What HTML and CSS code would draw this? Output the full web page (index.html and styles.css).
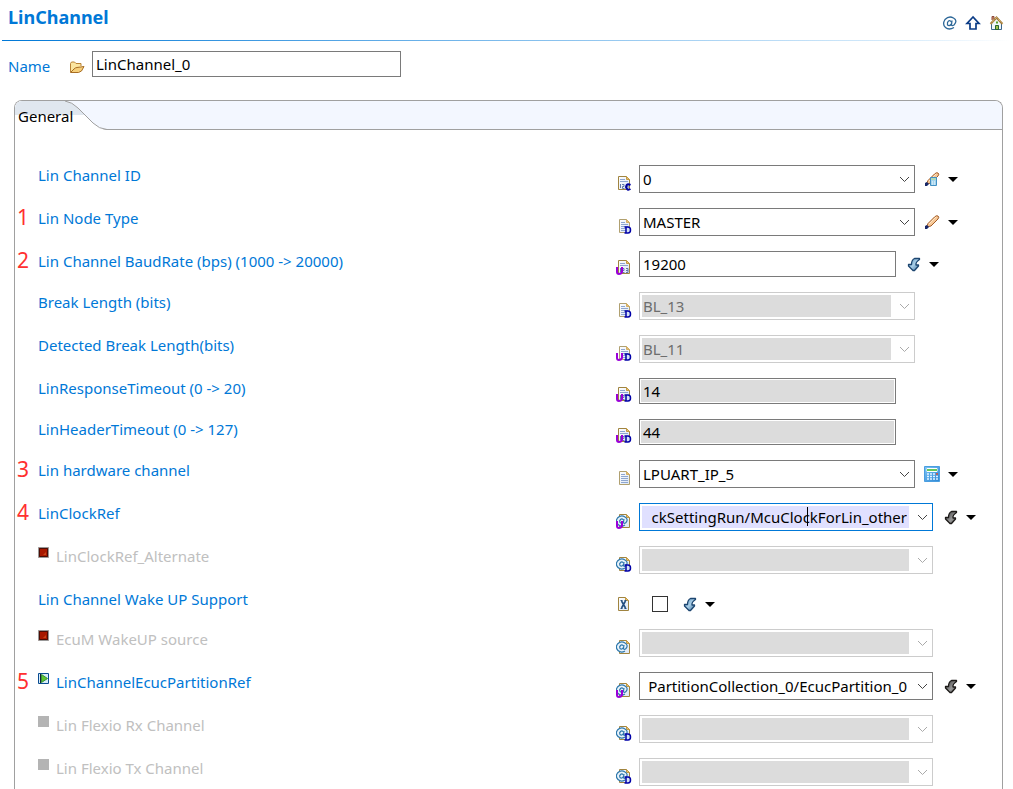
FILE: index.html
```html
<!DOCTYPE html>
<html lang="en">
<head>
  <meta charset="UTF-8" />
  <meta name="viewport" content="width=device-width, initial-scale=1.0"/>
  <title>LinChannel</title>
  <link rel="stylesheet" href="styles.css">
</head>
<body>
  <!-- Icon shapes used by the rows below -->
  <svg class="sprite" aria-hidden="true">
    <defs>
      <linearGradient id="blue" x1="0" y1="0" x2="1" y2="1"><stop offset="0" stop-color="#5f93bd"/><stop offset="0.5" stop-color="#a9cfe8"/><stop offset="1" stop-color="#3a6c9c"/></linearGradient>
      <linearGradient id="dark" x1="0" y1="0" x2="1" y2="1"><stop offset="0" stop-color="#333"/><stop offset="0.6" stop-color="#999"/><stop offset="1" stop-color="#444"/></linearGradient>
      <linearGradient id="calc" x1="0" y1="0" x2="1" y2="1"><stop offset="0" stop-color="#7cc4f6"/><stop offset="1" stop-color="#2b86d3"/></linearGradient>
      <linearGradient id="paper" x1="0" y1="0" x2="1" y2="1"><stop offset="0" stop-color="#fff"/><stop offset="1" stop-color="#dbe6f5"/></linearGradient>
    </defs>
    <symbol id="doc" viewBox="0 0 16 16">
      <path d="M3.500 1.500h7l3 3v10h-10z" fill="url(#paper)" stroke="#b0a070"/>
      <path d="M10.500 1.500v3h3z" fill="#e8c070" stroke="#d2ae66"/>
      <path d="M5 4.500h4M5 6.500h7M5 8.500h7M5 10.500h7M5 12.500h7" stroke="#8ea6d0"/>
    </symbol>
    <symbol id="doc-num" viewBox="0 0 16 16">
      <path d="M2.500 1.500h8l3 3v10h-11z" fill="url(#paper)" stroke="#a08440"/>
      <path d="M10.500 1.500v3h3z" fill="#e8c070" stroke="#c39a45"/>
      <path d="M4 4.500h5M4 6.500h8" stroke="#8ea6d0"/>
      <path d="M4.500 9v4M6 9.500h2v2h-1.500v2h2M10 9.500h2v4h-2M10 11.500h2" fill="none" stroke="#6078a8"/>
    </symbol>
    <symbol id="doc-ref" viewBox="0 0 16 16">
      <path d="M3.500 1.500h7l3 3v10h-10z" fill="url(#paper)" stroke="#a08440"/>
      <path d="M10.500 1.500v3h3z" fill="#e8c070" stroke="#c39a45"/>
      <circle cx="5.500" cy="8" r="5" fill="#e8f3fb"/>
      <path d="M9 12Q5 14.500 2 11.500T1.500 5Q5 1.500 9 4T9.500 10Q7.500 11 7.500 9L8 6" fill="none" stroke="#2e78ac" stroke-width="1.200"/>
      <path d="M7.500 7Q6 5 4.500 6.500T4 9.500Q6 11 7.500 8.500" fill="none" stroke="#2e78ac" stroke-width="1.200"/>
    </symbol>
    <symbol id="doc-x" viewBox="0 0 16 16">
      <path d="M2.500 1.500h7l3 3v10h-10z" fill="url(#paper)" stroke="#a08440"/>
      <path d="M9.500 1.500v3h3z" fill="#e8c070" stroke="#c39a45"/>
      <path d="M5.500 5l4 7M9.500 5l-4 7" stroke="#234f80" stroke-width="1.600"/>
      <path d="M4.500 4.500h2M8.500 4.500h2M4.500 12.500h2M8.500 12.500h2" stroke="#234f80"/>
    </symbol>
    <symbol id="mark-u" viewBox="0 0 16 16"><path d="M1 8v5q0 2 2 2t3-2v-5" fill="none" stroke="#9a00d8" stroke-width="2"/></symbol>
    <symbol id="mark-d" viewBox="0 0 16 16"><path d="M10 9h2q2.500 0 2.500 3t-2.500 3h-2zM8.500 9h2M8.500 15h2" fill="#d5e2f6" stroke="#0000a8" stroke-width="1.500"/></symbol>
    <symbol id="mark-c" viewBox="0 0 16 16"><path d="M14.500 10q-4-2-4.500 2q1 4 4.500 2" fill="none" stroke="#0000a0" stroke-width="2"/></symbol>
    <symbol id="pencil" viewBox="0 0 16 16">
      <path d="M2.500 13L4 9.500 10.500 3q2-2 3.500-1t0 3L7 12z" fill="#f7c896" stroke="#a25c28"/>
      <path d="M5 10l7-7" stroke="#ffe6c6"/>
      <path d="M1 15v-3l2-1 2 2-2 2z" fill="#182868"/>
    </symbol>
    <symbol id="pencil-calc" viewBox="0 0 16 16">
      <use href="#pencil"/>
      <path d="M6.500 6.500h6v8h-6z" fill="#a7d5ee" stroke="#4290c4"/>
      <path d="M7 8h5" stroke="#b8dd82"/>
      <path d="M8 11h1M10 11h1M8 13h1M10 13h1" stroke="#f2fbff"/>
    </symbol>
    <symbol id="calculator" viewBox="0 0 16 16">
      <path d="M0.500 0.500h15v15h-15z" fill="url(#calc)" stroke="#4b9ee0"/>
      <path d="M3 2.500h10v3H3z" fill="#e0f3c8" stroke="#fff"/>
      <path d="M3 4h10" stroke="#65c65b" stroke-width="2"/>
      <path d="M3 8h2M6 8h2M9 8h2M3 10.500h2M6 10.500h2M9 10.500h2M3 13h2M6 13h2M9 13h2" stroke="#e4f4ff" stroke-width="1.500"/>
      <path d="M12 8h2" stroke="#e04c30" stroke-width="1.500"/><path d="M12 10.500h2M12 13h2" stroke="#d8eeff" stroke-width="1.500"/>
    </symbol>
    <symbol id="goto" viewBox="0 0 16 16">
      <path d="M14.500 2.500H9.500Q6.500 4 6.500 8.500H3.500V10L8 14.500h1.500l4-4.500V9H11Q10.500 6 14.500 3.500z" stroke-width="1.300" stroke-linejoin="round"/>
    </symbol>
    <symbol id="caret" viewBox="0 0 10 5"><path d="M0 0h10L5 5z" fill="#000"/></symbol>
    <symbol id="chevron" viewBox="0 0 11 7"><path d="M1 1l4.500 4.500L10 1" fill="none" stroke="currentColor"/></symbol>
    <symbol id="stop" viewBox="0 0 11 11"><path d="M0.500 0.500h10v10h-10z" fill="#a81800" stroke="#999"/><path d="M1.500 1.500h8v8h-8z" fill="none" stroke="#4c0e06"/><path d="M5 8l3-3v3z" fill="#c84418"/></symbol>
    <symbol id="play" viewBox="0 0 11 11"><path d="M0.500 0.500h10v10h-10z" fill="#d8ecfa" stroke="#0a4c91"/><path d="M2.500 1v9" stroke="#123"/><path d="M3.500 1.500L9.500 5.500l-6 4z" fill="#5fc52f" stroke="#37913a"/></symbol>
    <symbol id="off" viewBox="0 0 11 11"><path d="M0 0h11v11H0z" fill="#b4b4b4"/></symbol>
  </svg>

  <header class="page-header">
    <h1>LinChannel</h1>
    <nav class="links">
      <a href="#reference" aria-label="Reference">
        <svg viewBox="0 0 16 16"><path d="M13 12.500Q8 15.500 4.500 12.500T4 4.500Q8 0.500 12.500 3T13 10Q10.500 11.500 10.500 9.500L11 5.500" fill="none" stroke="#2c6798" stroke-width="1.300"/><path d="M10.500 7Q9 5 7.500 6T6.500 10Q8.500 11.500 10.500 9" fill="none" stroke="#2c6798" stroke-width="1.300"/></svg>
      </a>
      <a href="#up" aria-label="Up">
        <svg viewBox="0 0 16 16"><path d="M8 2L2 8.500h3V14h6V8.500h3z" fill="#fff" stroke="#0b3c86" stroke-width="1.700"/></svg>
      </a>
      <a href="#home" aria-label="Home">
        <svg viewBox="0 0 16 16"><path d="M2.500 8v6.500h10V8L7.500 3z" fill="#eef6fb" stroke="#3b658c"/><path d="M3 5V1.500h2V4" fill="#d58c6a" stroke="#8a4b3c"/><path d="M1.500 9L7.500 2.500l6 6.500" fill="none" stroke="#a07838" stroke-width="2"/><path d="M2 8.500L7.500 2.500l6 6" fill="none" stroke="#f1d38c" stroke-dasharray="1 1"/><path d="M6.500 10.500h3v4h-3z" fill="#3f9f50" stroke="#27652e"/><path d="M7 7.500h2" stroke="#55a02c" stroke-width="2"/><path d="M8 11v3" stroke="#ffe04a"/></svg>
      </a>
    </nav>
  </header>

  <div class="name-row">
    <label for="name">Name</label>
    <svg class="icon" viewBox="0 0 16 16"><path d="M1.500 13V4.500l1-1.500h3l1.500 1.500h5V7" fill="#fbe5a0" stroke="#b98235"/><path d="M1.500 13.500L5 10q1.500-1.500 3-1.500l7-1L12.500 12l-3 1.500z" fill="#f6cf7a" stroke="#a86d22"/></svg>
    <input type="text" id="name" class="text" value="LinChannel_0">
  </div>

  <main class="panel">
    <div class="tabs" role="tablist">
      <button type="button" class="tab" role="tab" aria-selected="true">
        <svg viewBox="0 0 92 30"><path d="M0 30V0h50q7 1 13 7l15 15q6 6 14 7v1z" fill="#fff"/><path d="M0 14V0h50q7 1 13 7l7 7z" fill="#e0e7ef"/><path d="M50 0q7 1 13 7l15 15q6 6 14 6.500" fill="none" stroke="#a0a0a0"/></svg>
        <span>General</span>
      </button>
    </div>

    <form class="rows">
      <div class="row">
        <span class="number"></span>
        <div class="caption"><label for="channelId">Lin Channel ID</label></div>
        <svg class="icon status"><use href="#doc-num"/><use href="#mark-c"/></svg>
        <div class="field">
          <span class="combo"><select id="channelId"><option>0</option></select><svg class="chevron"><use href="#chevron"/></svg></span>
          <button type="button" class="tool" aria-label="Edit calculated value"><svg class="icon"><use href="#pencil-calc"/></svg><svg class="caret"><use href="#caret"/></svg></button>
        </div>
      </div>

      <div class="row">
        <span class="number">1</span>
        <div class="caption"><label for="nodeType">Lin Node Type</label></div>
        <svg class="icon status"><use href="#doc"/><use href="#mark-d"/></svg>
        <div class="field">
          <span class="combo"><select id="nodeType"><option>MASTER</option></select><svg class="chevron"><use href="#chevron"/></svg></span>
          <button type="button" class="tool" aria-label="Edit value"><svg class="icon"><use href="#pencil"/></svg><svg class="caret"><use href="#caret"/></svg></button>
        </div>
      </div>

      <div class="row">
        <span class="number">2</span>
        <div class="caption"><label for="baudRate">Lin Channel BaudRate (bps) (1000 -&gt; 20000)</label></div>
        <svg class="icon status"><use href="#doc-num"/><use href="#mark-u"/></svg>
        <div class="field">
          <input type="text" id="baudRate" class="text" value="19200">
          <button type="button" class="tool" aria-label="Set default"><svg class="icon goto-blue"><use href="#goto"/></svg><svg class="caret"><use href="#caret"/></svg></button>
        </div>
      </div>

      <div class="row">
        <span class="number"></span>
        <div class="caption"><label for="breakLength">Break Length (bits)</label></div>
        <svg class="icon status"><use href="#doc"/><use href="#mark-d"/></svg>
        <div class="field">
          <span class="combo"><select id="breakLength" disabled><option>BL_13</option></select><svg class="chevron"><use href="#chevron"/></svg></span>
        </div>
      </div>

      <div class="row">
        <span class="number"></span>
        <div class="caption"><label for="detectedBreak">Detected Break Length(bits)</label></div>
        <svg class="icon status"><use href="#doc"/><use href="#mark-u"/><use href="#mark-d"/></svg>
        <div class="field">
          <span class="combo"><select id="detectedBreak" disabled><option>BL_11</option></select><svg class="chevron"><use href="#chevron"/></svg></span>
        </div>
      </div>

      <div class="row">
        <span class="number"></span>
        <div class="caption"><label for="responseTimeout">LinResponseTimeout (0 -&gt; 20)</label></div>
        <svg class="icon status"><use href="#doc-num"/><use href="#mark-u"/><use href="#mark-d"/></svg>
        <div class="field"><input type="text" id="responseTimeout" class="text" value="14" readonly></div>
      </div>

      <div class="row">
        <span class="number"></span>
        <div class="caption"><label for="headerTimeout">LinHeaderTimeout (0 -&gt; 127)</label></div>
        <svg class="icon status"><use href="#doc-num"/><use href="#mark-u"/><use href="#mark-d"/></svg>
        <div class="field"><input type="text" id="headerTimeout" class="text" value="44" readonly></div>
      </div>

      <div class="row">
        <span class="number">3</span>
        <div class="caption"><label for="hardwareChannel">Lin hardware channel</label></div>
        <svg class="icon status"><use href="#doc"/></svg>
        <div class="field">
          <span class="combo"><select id="hardwareChannel"><option>LPUART_IP_5</option></select><svg class="chevron"><use href="#chevron"/></svg></span>
          <button type="button" class="tool" aria-label="Calculate"><svg class="icon"><use href="#calculator"/></svg><svg class="caret"><use href="#caret"/></svg></button>
        </div>
      </div>

      <div class="row">
        <span class="number">4</span>
        <div class="caption"><label for="clockRef">LinClockRef</label></div>
        <svg class="icon status"><use href="#doc-ref"/><use href="#mark-u"/></svg>
        <div class="field">
          <span class="combo wide active"><input type="text" id="clockRef" value="ckSettingRun/McuClockForLin_other"><span class="cursor"></span><svg class="chevron"><use href="#chevron"/></svg></span>
          <button type="button" class="tool" aria-label="Go to reference"><svg class="icon goto-dark"><use href="#goto"/></svg><svg class="caret"><use href="#caret"/></svg></button>
        </div>
      </div>

      <div class="row">
        <span class="number"></span>
        <div class="caption off"><svg class="state"><use href="#stop"/></svg><label for="clockRefAlt">LinClockRef_Alternate</label></div>
        <svg class="icon status"><use href="#doc-ref"/><use href="#mark-d"/></svg>
        <div class="field">
          <span class="combo wide"><select id="clockRefAlt" disabled></select><svg class="chevron"><use href="#chevron"/></svg></span>
        </div>
      </div>

      <div class="row check-row">
        <span class="number"></span>
        <div class="caption"><label for="wakeUp">Lin Channel Wake UP Support</label></div>
        <svg class="icon status"><use href="#doc-x"/></svg>
        <div class="field">
          <input type="checkbox" id="wakeUp">
          <button type="button" class="tool" aria-label="Set default"><svg class="icon goto-blue"><use href="#goto"/></svg><svg class="caret"><use href="#caret"/></svg></button>
        </div>
      </div>

      <div class="row">
        <span class="number"></span>
        <div class="caption off"><svg class="state"><use href="#stop"/></svg><label for="wakeUpSource">EcuM WakeUP source</label></div>
        <svg class="icon status"><use href="#doc-ref"/></svg>
        <div class="field">
          <span class="combo wide"><select id="wakeUpSource" disabled></select><svg class="chevron"><use href="#chevron"/></svg></span>
        </div>
      </div>

      <div class="row">
        <span class="number">5</span>
        <div class="caption"><svg class="state"><use href="#play"/></svg><label for="partitionRef">LinChannelEcucPartitionRef</label></div>
        <svg class="icon status"><use href="#doc-ref"/><use href="#mark-u"/></svg>
        <div class="field">
          <span class="combo wide"><input type="text" id="partitionRef" value="PartitionCollection_0/EcucPartition_0"><svg class="chevron"><use href="#chevron"/></svg></span>
          <button type="button" class="tool" aria-label="Go to reference"><svg class="icon goto-dark"><use href="#goto"/></svg><svg class="caret"><use href="#caret"/></svg></button>
        </div>
      </div>

      <div class="row">
        <span class="number"></span>
        <div class="caption off"><svg class="state"><use href="#off"/></svg><label for="flexioRx">Lin Flexio Rx Channel</label></div>
        <svg class="icon status"><use href="#doc-ref"/><use href="#mark-d"/></svg>
        <div class="field">
          <span class="combo wide"><select id="flexioRx" disabled></select><svg class="chevron"><use href="#chevron"/></svg></span>
        </div>
      </div>

      <div class="row">
        <span class="number"></span>
        <div class="caption off"><svg class="state"><use href="#off"/></svg><label for="flexioTx">Lin Flexio Tx Channel</label></div>
        <svg class="icon status"><use href="#doc-ref"/><use href="#mark-d"/></svg>
        <div class="field">
          <span class="combo wide"><select id="flexioTx" disabled></select><svg class="chevron"><use href="#chevron"/></svg></span>
        </div>
      </div>
    </form>
  </main>
</body>
</html>
```

FILE: styles.css
```css
* {
  margin: 0;
  padding: 0;
  box-sizing: border-box;
}
body {
  display: flex;
  flex-direction: column;
  min-height: 100vh;
  background: #fff;
  color: #000;
  font-family: "Noto Sans", "Open Sans", sans-serif;
  font-size: 15px;
  line-height: 20px;
}
input, select, button {
  font: inherit;
  color: inherit;
}
button {
  background: none;
  border: none;
  cursor: pointer;
}
svg {
  display: block;
  flex: none;
}
.sprite {
  position: absolute;
  width: 0;
  height: 0;
}
.icon {
  width: 16px;
  height: 16px;
}

/* Title bar */
.page-header {
  display: flex;
  justify-content: space-between;
  height: 41px;
  margin: 0 4px 0 2px;
  padding: 7px 4px 0 6px;
  border-bottom: 1px solid;
  border-image: linear-gradient(to right, #0078d7, #7fbcec 50%, #d8ecfb 90%, #fff) 1;
}
h1 {
  color: #0078d7;
  font-size: 18px;
  line-height: 20px;
}
.links {
  display: flex;
  gap: 8px;
  padding-top: 8px;
}
.links svg {
  width: 16px;
  height: 16px;
}
.name-row {
  display: flex;
  align-items: center;
  margin: 10px 8px 23px;
}
.name-row label {
  width: 61px;
  padding-top: 4px;
  color: #0078d7;
}
.name-row .icon {
  margin: 6px 7px 0 0;
}
.name-row .text {
  width: 309px;
}

/* Tab panel */
.panel {
  flex: 1;
  margin: 0 10px 0 14px;
  border: 1px solid #a0a0a0;
  border-bottom: none;
  border-radius: 8px 8px 0 0;
}
.tabs {
  height: 29px;
  background: #f3f7ff;
  border-bottom: 1px solid #a0a0a0;
  border-radius: 7px 7px 0 0;
}
.tab {
  position: relative;
  width: 92px;
  height: 29px;
  padding-left: 3px;
  border-radius: 7px 0 0 0;
  overflow: hidden;
  text-align: left;
}
.tab svg {
  position: absolute;
  top: 0;
  left: 0;
  width: 92px;
  height: 30px;
}
.tab span {
  position: relative;
}

/* Parameter rows */
.rows {
  display: flex;
  flex-direction: column;
  gap: 15px;
  padding: 35px 0 3px;
}
.row {
  display: grid;
  grid-template-columns: 16px 1fr 16px 363px;
  column-gap: 7px;
}
.check-row {
  height: 25px;
}
.number {
  color: #ff3030;
  font-size: 21px;
  line-height: 18px;
  text-align: center;
}
.caption {
  display: flex;
  align-items: flex-start;
  gap: 7px;
  color: #0078d7;
}
.caption.off {
  color: #c0c0c0;
}
.state {
  width: 11px;
  height: 11px;
  margin-top: 1px;
}
.status {
  align-self: end;
  margin-bottom: 2px;
}
.field {
  display: flex;
  align-items: center;
}

/* Controls */
.text {
  width: 257px;
  height: 26px;
  padding: 0 3px;
  border: 1px solid #7a7a7a;
  background: #fff;
}
.text[readonly] {
  background: #dcdcdc;
  box-shadow: inset 0 0 0 1px #fff;
}
.combo {
  position: relative;
  width: 276px;
  height: 28px;
}
.combo.wide {
  width: 294px;
}
.combo select, .combo input {
  appearance: none;
  width: 100%;
  height: 28px;
  padding: 0 25px 1px 3px;
  border: 1px solid #7a7a7a;
  border-radius: 0;
  background: #fff;
}
/* long references keep their tail in view */
.combo input {
  padding: 0 25px 1px 2px;
  direction: rtl;
}
.combo select:disabled {
  border-color: #ccc;
  background: linear-gradient(#dcdcdc, #dcdcdc) no-repeat 2px 2px / calc(100% - 25px) calc(100% - 4px);
  color: #6d6d6d;
  opacity: 1;
}
.combo.active input {
  border-color: #0078d7;
  background: linear-gradient(#e0e0ff, #e0e0ff) no-repeat 2px 2px / calc(100% - 25px) calc(100% - 4px);
}
.chevron {
  position: absolute;
  top: 11px;
  right: 5px;
  width: 11px;
  height: 7px;
  color: #444;
  pointer-events: none;
}
select:disabled + .chevron {
  color: #aaa;
}
.cursor {
  position: absolute;
  top: 4px;
  right: 125px;
  width: 1px;
  height: 19px;
  background: #000;
}
.tool {
  display: flex;
  align-items: center;
  gap: 8px;
  margin-left: 9px;
}
.caret {
  width: 10px;
  height: 5px;
}
.goto-blue {
  fill: url(#blue);
  stroke: #1d4670;
}
.goto-dark {
  fill: url(#dark);
  stroke: #1c1a18;
}
input[type="checkbox"] {
  appearance: none;
  width: 16px;
  height: 16px;
  margin: 5px 4px 0 13px;
  border: 1px solid #333;
  background: #fff;
}
.check-row .tool {
  padding-top: 5px;
}
```
